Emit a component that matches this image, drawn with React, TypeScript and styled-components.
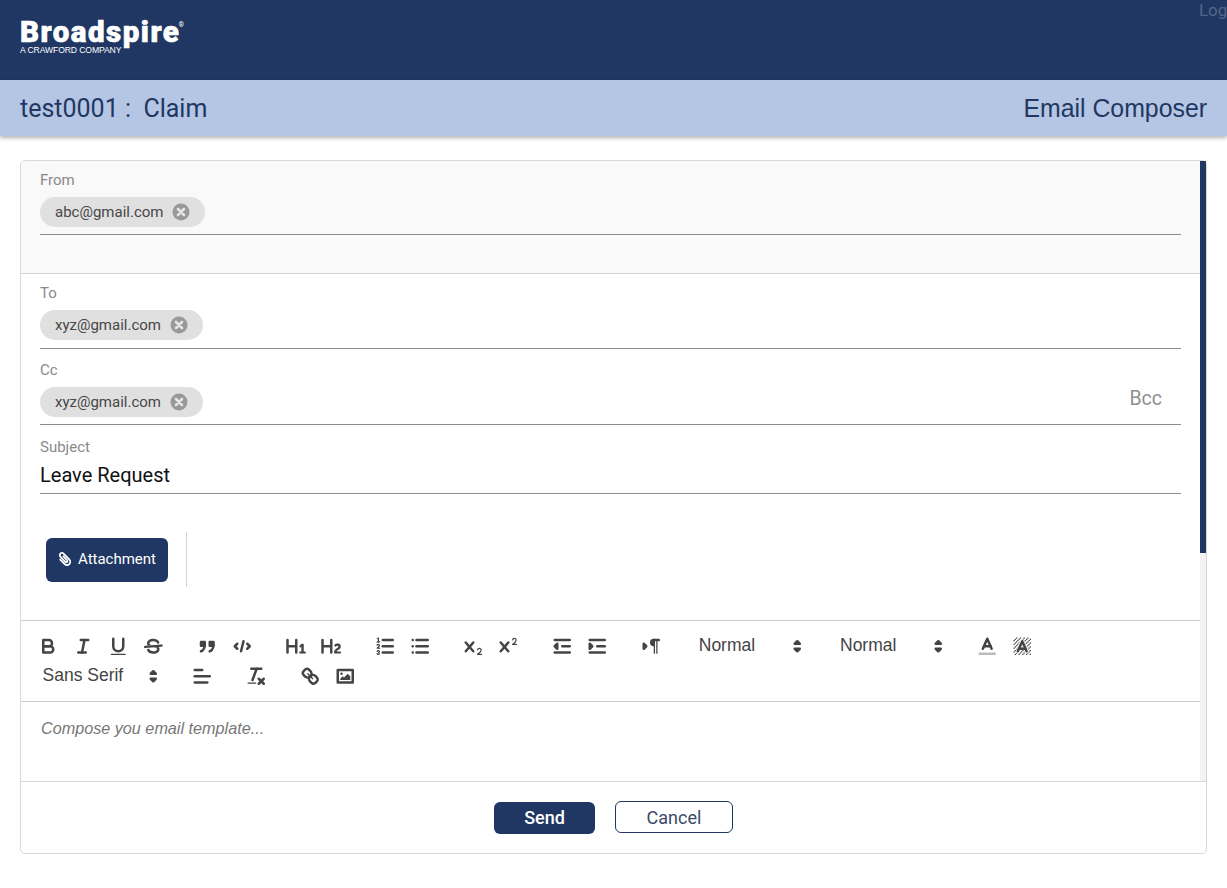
import React from "react"
import styled, { createGlobalStyle } from "styled-components"
import { FaPaperclip } from "react-icons/fa"

const navy = "#1f3762"

const GlobalStyle = createGlobalStyle`
  html, body {
    margin: 0;
    padding: 0;
    background: #fff;
    overflow: hidden;
  }
  body {
    font-family: Roboto, "Liberation Sans", sans-serif;
  }
  * {
    box-sizing: border-box;
  }
`

const Page = styled.div`
  width: 1227px;
  height: 888px;
  overflow: hidden;
`

const Header = styled.header`
  height: 80px;
  display: flex;
  justify-content: space-between;
  background-color: ${navy};
`

const Logo = styled.div`
  padding: 18px 0 0 20px;
  color: #fff;
`

const LogoName = styled.div`
  font-family: "Roboto", sans-serif;
  font-size: 29.5px;
  font-weight: 900;
  line-height: 28px;
  letter-spacing: 1.5px;
  -webkit-text-stroke: 0.6px #fff;

  sup {
    margin-left: -2px;
    font-size: 7px;
    font-weight: 400;
    letter-spacing: 0;
    line-height: 0;
    vertical-align: 15px;
    -webkit-text-stroke: 0;
  }
`

const LogoTag = styled.div`
  font-family: "Liberation Sans", sans-serif;
  font-size: 8.6px;
  line-height: 8px;
  letter-spacing: -0.1px;
`

const Logout = styled.a`
  flex: none;
  height: 20px;
  margin: 0 -25px 0 0;
  font-size: 17px;
  line-height: 20px;
  color: #53668b;
`

const SubHeader = styled.div`
  height: 56px;
  padding: 0 20px;
  display: flex;
  justify-content: space-between;
  align-items: center;
  background-color: #b4c6e4;
  box-shadow: 0 2px 4px rgba(0, 0, 0, 0.3);
  color: ${navy};
`

const ClaimTitle = styled.div`
  font-size: 25px;
  white-space: pre;
`

const ComposerTitle = styled.div`
  padding-top: 1px;
  font-family: "Liberation Sans", sans-serif;
  font-size: 24.85px;
`

const Card = styled.section`
  height: 694px;
  margin: 24px 20px 0;
  display: flex;
  flex-direction: column;
  border: 1px solid #d8d8d8;
  border-radius: 5px;
`

const CardBody = styled.div`
  flex: 1;
  min-height: 0;
  display: flex;
`

const ComposePane = styled.div`
  flex: 1;
  min-width: 0;
  overflow: hidden;
`

const ScrollTrack = styled.div`
  flex: none;
  width: 6px;
  background-color: #f3f3f3;
`

const ScrollThumb = styled.div`
  height: 392px;
  background-color: ${navy};
`

const FromSection = styled.div`
  height: 113px;
  padding: 10px 19px 0;
  background-color: #f9f9f9;
  border-bottom: 1px solid #d4d4d4;
  border-top-left-radius: 4px;
`

const Fields = styled.div`
  padding: 10px 19px 0;
`

const Field = styled.div<{ $gap?: number }>`
  margin-top: ${props => props.$gap || 0}px;
`

const Label = styled.div`
  height: 18px;
  margin-bottom: 8px;
  font-size: 15px;
  line-height: 18px;
  color: #8a8a8a;
`

const ChipRow = styled.div<{ $pad?: number }>`
  display: flex;
  justify-content: space-between;
  align-items: center;
  padding-bottom: ${props => props.$pad || 7}px;
  border-bottom: 1px solid #8c8c8c;
`

const Chip = styled.div`
  height: 30px;
  padding: 0 15px;
  display: inline-flex;
  align-items: center;
  gap: 9px;
  border-radius: 15px;
  background-color: #e0e0e0;
  color: #474747;
  font-size: 15px;
`

const BccLink = styled.span`
  margin-right: 19px;
  padding-bottom: 6px;
  font-size: 19.5px;
  line-height: 24px;
  color: #8f8f8f;
`

const SubjectValue = styled.div`
  height: 32px;
  margin-top: -2px;
  border-bottom: 1px solid #8c8c8c;
  font-size: 20px;
  line-height: 26px;
  color: #111;
`

const AttachmentRow = styled.div`
  height: 126px;
  padding: 38px 0 0 25px;
  display: flex;
  align-items: flex-start;
`

const AttachmentButton = styled.button`
  width: 122px;
  height: 44px;
  margin-top: 6px;
  padding: 0 0 2px;
  display: flex;
  align-items: center;
  justify-content: center;
  gap: 6px;
  border: 0;
  border-radius: 6px;
  background-color: ${navy};
  color: #fff;
  font-family: inherit;
  font-size: 15px;
  font-weight: 400;

  svg {
    transform: scaleX(-1);
  }
`

const VerticalRule = styled.div`
  width: 1px;
  height: 55px;
  margin-left: 18px;
  background-color: #d4d4d4;
`

const Toolbar = styled.div`
  padding: 10px;
  display: flex;
  flex-wrap: wrap;
  border-top: 1px solid #ccc;
  border-bottom: 1px solid #ccc;
`

const ToolGroup = styled.div`
  margin-right: 18.75px;
  display: flex;
`

const ToolButton = styled.button`
  width: 35px;
  height: 30px;
  padding: 3.75px 6.25px;
  border: 0;
  background: none;

  svg {
    display: block;
    width: 22.5px;
    height: 22.5px;
  }
`

const Picker = styled.div<{ $width: number }>`
  width: ${props => props.$width}px;
  height: 30px;
  padding: 0 0 2px 11.5px;
  display: flex;
  align-items: center;
  justify-content: space-between;
  font-family: "Liberation Sans", sans-serif;
  font-size: 17.5px;
  color: #444;

  svg {
    width: 22.5px;
    height: 22.5px;
    margin: 2px 1.5px 0 0;
  }
`

const Stroke = styled.g`
  fill: none;
  stroke: #444;
  stroke-width: 2;
  stroke-linecap: round;
  stroke-linejoin: round;
`

const Fill = styled.g`
  fill: #444;
`

const Editor = styled.div`
  padding: 15px 20px;
  font-family: "Liberation Sans", sans-serif;
  font-size: 16.2px;
  font-style: italic;
  line-height: 22px;
  color: #777;
`

const Footer = styled.footer`
  height: 72px;
  padding-top: 19px;
  display: flex;
  justify-content: center;
  align-items: flex-start;
  gap: 20px;
  border-top: 1px solid #d8d8d8;
`

const SendButton = styled.button`
  width: 101px;
  height: 32px;
  margin-top: 1px;
  padding: 0 0 2px;
  border: 0;
  border-radius: 6px;
  background-color: ${navy};
  color: #fff;
  font-family: inherit;
  font-size: 18px;
  font-weight: 500;
`

const CancelButton = styled.button`
  width: 118px;
  height: 32px;
  border: 1px solid ${navy};
  border-radius: 6px;
  background-color: #fff;
  color: #3b4a6b;
  font-family: inherit;
  font-size: 18px;
`

function ChipDelete() {
  return (
    <svg width="18" height="18" viewBox="0 0 18 18">
      <circle cx="9" cy="9" r="8.5" fill="#999" />
      <path d="M6 6l6 6M12 6l-6 6" stroke="#e6e6e6" strokeWidth="2.6" strokeLinecap="round" />
    </svg>
  )
}

function Icon({ children }: { children: React.ReactNode }) {
  return (
    <ToolButton type="button">
      <svg viewBox="0 0 18 18">{children}</svg>
    </ToolButton>
  )
}

function Arrows() {
  return (
    <svg viewBox="0 0 18 18">
      <Stroke>
        <polygon points="7 11 9 13 11 11 7 11" fill="#444" />
        <polygon points="7 7 9 5 11 7 7 7" fill="#444" />
      </Stroke>
    </svg>
  )
}

const crossX =
  "M9.65,5.241a1,1,0,0,0-1.409.108L6,7.964,3.759,5.349A1,1,0,0,0,2.192,6.59178Q2.2,6.6,2.241,6.651L4.684,9.5,2.241,12.349A1,1,0,0,0,3.759,13.651L6,11.036l2.241,2.615a1,1,0,0,0,1.519-1.3L7.316,9.5,9.759,6.651A1,1,0,0,0,9.65,5.241Z"

// diagonal hatch behind the background colour icon
const hatch: [number, number][] = []
for (let y = 2; y < 16; y++) {
  for (let x = 2; x < 16; x++) {
    if ((x + y) % 3 === 0) hatch.push([x, y])
  }
}

export default function App() {
  return (
    <Page>
      <GlobalStyle />
      <Header>
        <Logo>
          <LogoName>
            Broadspire<sup>®</sup>
          </LogoName>
          <LogoTag>A CRAWFORD COMPANY</LogoTag>
        </Logo>
        <Logout>Logout</Logout>
      </Header>
      <SubHeader>
        <ClaimTitle>test0001 :  Claim</ClaimTitle>
        <ComposerTitle>Email Composer</ComposerTitle>
      </SubHeader>
      <Card>
        <CardBody>
          <ComposePane>
            <FromSection>
              <Label>From</Label>
              <ChipRow>
                <Chip>
                  abc@gmail.com
                  <ChipDelete />
                </Chip>
              </ChipRow>
            </FromSection>
            <Fields>
              <Field>
                <Label>To</Label>
                <ChipRow $pad={8}>
                  <Chip>
                    xyz@gmail.com
                    <ChipDelete />
                  </Chip>
                </ChipRow>
              </Field>
              <Field $gap={12}>
                <Label>Cc</Label>
                <ChipRow>
                  <Chip>
                    xyz@gmail.com
                    <ChipDelete />
                  </Chip>
                  <BccLink>Bcc</BccLink>
                </ChipRow>
              </Field>
              <Field $gap={13}>
                <Label>Subject</Label>
                <SubjectValue>Leave Request</SubjectValue>
              </Field>
            </Fields>
            <AttachmentRow>
              <AttachmentButton type="button">
                <FaPaperclip size={14} />
                Attachment
              </AttachmentButton>
              <VerticalRule />
            </AttachmentRow>
            <Toolbar>
              <ToolGroup>
                <Icon>
                  <Stroke>
                    <path d="M5,4H9.5A2.5,2.5,0,0,1,12,6.5v0A2.5,2.5,0,0,1,9.5,9H5A0,0,0,0,1,5,9V4A0,0,0,0,1,5,4Z" />
                    <path d="M5,9h5.5A2.5,2.5,0,0,1,13,11.5v0A2.5,2.5,0,0,1,10.5,14H5a0,0,0,0,1,0,0V9A0,0,0,0,1,5,9Z" />
                  </Stroke>
                </Icon>
                <Icon>
                  <Stroke>
                    <line x1="7" x2="13" y1="4" y2="4" />
                    <line x1="5" x2="11" y1="14" y2="14" />
                    <line x1="8" x2="10" y1="14" y2="4" />
                  </Stroke>
                </Icon>
                <Icon>
                  <Stroke>
                    <path d="M5,3V9a4.012,4.012,0,0,0,4,4H9a4.012,4.012,0,0,0,4-4V3" />
                  </Stroke>
                  <Fill>
                    <rect height="1" rx="0.5" ry="0.5" width="12" x="3" y="15" />
                  </Fill>
                </Icon>
                <Icon>
                  <Stroke>
                    <line x1="15.5" x2="2.5" y1="8.5" y2="9.5" />
                  </Stroke>
                  <Fill>
                    <path d="M9.007,8C6.542,7.791,6,7.519,6,6.5,6,5.792,7.283,5,9,5c1.571,0,2.765.679,2.969,1.309a1,1,0,0,0,1.9-.617C13.356,4.106,11.354,3,9,3,6.2,3,4,4.538,4,6.5a3.2,3.2,0,0,0,.5,1.843Z" />
                    <path d="M8.984,10C11.457,10.208,12,10.479,12,11.5c0,.708-1.283,1.5-3,1.5-1.571,0-2.765-.679-2.969-1.309a1,1,0,1,0-1.9.617C4.644,13.894,6.646,15,9,15c2.8,0,5-1.538,5-3.5a3.2,3.2,0,0,0-.5-1.843Z" />
                  </Fill>
                </Icon>
              </ToolGroup>
              <ToolGroup>
                <Icon>
                  <Stroke>
                    <rect height="3" width="3" x="4" y="5.5" fill="#444" />
                    <rect height="3" width="3" x="11" y="5.5" fill="#444" />
                    <path d="M7,8c0,4.031-3,5-3,5" />
                    <path d="M14,8c0,4.031-3,5-3,5" />
                  </Stroke>
                </Icon>
                <Icon>
                  <Stroke>
                    <polyline points="5 7 3 9 5 11" />
                    <polyline points="13 7 15 9 13 11" />
                    <line x1="10" x2="8" y1="5" y2="13" />
                  </Stroke>
                </Icon>
              </ToolGroup>
              <ToolGroup>
                <Icon>
                  <Fill>
                    <path d="M10,4V14a1,1,0,0,1-2,0V10H3v4a1,1,0,0,1-2,0V4A1,1,0,0,1,3,4V8H8V4a1,1,0,0,1,2,0Zm6.06787,9.209H14.98975V7.59863a.54085.54085,0,0,0-.605-.60547h-.62744a1.01119,1.01119,0,0,0-.748.29688L11.645,8.56641a.5435.5435,0,0,0-.022.8584l.28613.30762a.53861.53861,0,0,0,.84717.0332l.09912-.08789a1.2137,1.2137,0,0,0,.2417-.35254h.02246s-.01123.30859-.01123.60547V13.209H12.041a.54085.54085,0,0,0-.605.60547v.43945a.54085.54085,0,0,0,.605.60547h4.02686a.54085.54085,0,0,0,.605-.60547v-.43945A.54085.54085,0,0,0,16.06787,13.209Z" />
                  </Fill>
                </Icon>
                <Icon>
                  <Fill>
                    <path d="M16.73975,13.81445v.43945a.54085.54085,0,0,1-.605.60547H11.855a.58392.58392,0,0,1-.64893-.60547V14.0127c0-2.90527,3.39941-3.42187,3.39941-4.55469a.77675.77675,0,0,0-.84717-.78125,1.17684,1.17684,0,0,0-.83594.38477c-.2749.26367-.561.374-.85791.13184l-.4292-.34082c-.30811-.24219-.38525-.51758-.1543-.81445a2.97155,2.97155,0,0,1,2.45361-1.17676,2.45393,2.45393,0,0,1,2.68408,2.40918c0,2.45312-3.1792,2.92676-3.27832,3.93848h2.79443A.54085.54085,0,0,1,16.73975,13.81445ZM9,3A.99974.99974,0,0,0,8,4V8H3V4A1,1,0,0,0,1,4V14a1,1,0,0,0,2,0V10H8v4a1,1,0,0,0,2,0V4A.99974.99974,0,0,0,9,3Z" />
                  </Fill>
                </Icon>
              </ToolGroup>
              <ToolGroup>
                <Icon>
                  <Stroke>
                    <line x1="7" x2="15" y1="4" y2="4" />
                    <line x1="7" x2="15" y1="9" y2="9" />
                    <line x1="7" x2="15" y1="14" y2="14" />
                  </Stroke>
                  <Stroke style={{ strokeWidth: 1 }}>
                    <line x1="2.5" x2="4.5" y1="5.5" y2="5.5" />
                    <path d="M4.5,10.5h-2c0-.234,1.85-1.076,1.85-2.234A0.959,0.959,0,0,0,2.5,8.156" />
                    <path d="M2.5,14.846a0.959,0.959,0,0,0,1.85-.109A0.7,0.7,0,0,0,3.75,14a0.688,0.688,0,0,0,.6-0.736,0.959,0.959,0,0,0-1.85-.109" />
                  </Stroke>
                  <Fill>
                    <path d="M3.5,6A0.5,0.5,0,0,1,3,5.5V3.085l-0.276.138A0.5,0.5,0,0,1,2.053,3c-0.124-.247-0.023-0.324.224-0.447l1-.5A0.5,0.5,0,0,1,4,2.5v3A0.5,0.5,0,0,1,3.5,6Z" />
                  </Fill>
                </Icon>
                <Icon>
                  <Stroke>
                    <line x1="6" x2="15" y1="4" y2="4" />
                    <line x1="6" x2="15" y1="9" y2="9" />
                    <line x1="6" x2="15" y1="14" y2="14" />
                    <line x1="3" x2="3" y1="4" y2="4" />
                    <line x1="3" x2="3" y1="9" y2="9" />
                    <line x1="3" x2="3" y1="14" y2="14" />
                  </Stroke>
                </Icon>
              </ToolGroup>
              <ToolGroup>
                <Icon>
                  <Fill>
                    <path d="M15.5,15H13.861a3.858,3.858,0,0,0,1.914-2.975,1.8,1.8,0,0,0-1.6-1.751A1.921,1.921,0,0,0,12.021,11.7a0.50013,0.50013,0,1,0,.957.291h0a0.914,0.914,0,0,1,1.053-.725,0.81,0.81,0,0,1,.744.762c0,1.076-1.16971,1.86982-1.93971,2.43082A1.45639,1.45639,0,0,0,12,15.5a0.5,0.5,0,0,0,.5.5h3A0.5,0.5,0,0,0,15.5,15Z" />
                    <path d={crossX} />
                  </Fill>
                </Icon>
                <Icon>
                  <Fill>
                    <path d="M15.5,7H13.861a4.015,4.015,0,0,0,1.914-2.975,1.8,1.8,0,0,0-1.6-1.751A1.922,1.922,0,0,0,12.021,3.7a0.5,0.5,0,1,0,.957.291,0.917,0.917,0,0,1,1.053-.725,0.81,0.81,0,0,1,.744.762c0,1.077-1.164,1.925-1.934,2.486A1.423,1.423,0,0,0,12,7.5a0.5,0.5,0,0,0,.5.5h3A0.5,0.5,0,0,0,15.5,7Z" />
                    <path d={crossX} />
                  </Fill>
                </Icon>
              </ToolGroup>
              <ToolGroup>
                <Icon>
                  <Stroke>
                    <line x1="3" x2="15" y1="14" y2="14" />
                    <line x1="3" x2="15" y1="4" y2="4" />
                    <line x1="9" x2="15" y1="9" y2="9" />
                    <polygon points="5 7 5 11 3 9 5 7" fill="#444" />
                  </Stroke>
                </Icon>
                <Icon>
                  <Stroke>
                    <line x1="3" x2="15" y1="14" y2="14" />
                    <line x1="3" x2="15" y1="4" y2="4" />
                    <line x1="9" x2="15" y1="9" y2="9" />
                    <polyline points="3 7 3 11 5 9 3 7" fill="#444" />
                  </Stroke>
                </Icon>
              </ToolGroup>
              <ToolGroup>
                <Icon>
                  <Stroke>
                    <polygon points="3 11 5 9 3 7 3 11" fill="#444" />
                    <line x1="15" x2="11" y1="4" y2="4" />
                  </Stroke>
                  <Fill>
                    <path d="M11,3a3,3,0,0,0,0,6h1V3H11Z" />
                    <rect height="11" width="1" x="11" y="4" />
                    <rect height="11" width="1" x="13" y="4" />
                  </Fill>
                </Icon>
              </ToolGroup>
              <ToolGroup>
                <Picker $width={122.5}>
                  Normal
                  <Arrows />
                </Picker>
              </ToolGroup>
              <ToolGroup>
                <Picker $width={122.5}>
                  Normal
                  <Arrows />
                </Picker>
              </ToolGroup>
              <ToolGroup>
                <Icon>
                  <Stroke>
                    <line x1="3" x2="15" y1="15" y2="15" stroke="#bbb" />
                    <polyline points="5.5 11 9 3 12.5 11" />
                    <line x1="11.63" x2="6.38" y1="9" y2="9" />
                  </Stroke>
                </Icon>
                <Icon>
                  <Fill>
                    {hatch.map(([x, y]) => (
                      <rect key={`${x}-${y}`} x={x} y={y} width="1" height="1" />
                    ))}
                  </Fill>
                  <Stroke style={{ stroke: "#fff", strokeWidth: 3.2 }}>
                    <polyline points="5.5 13 9 5 12.5 13" />
                  </Stroke>
                  <Stroke>
                    <polyline points="5.5 13 9 5 12.5 13" />
                    <line x1="11.63" x2="6.38" y1="11" y2="11" />
                  </Stroke>
                </Icon>
              </ToolGroup>
              <ToolGroup>
                <Picker $width={135}>
                  Sans Serif
                  <Arrows />
                </Picker>
              </ToolGroup>
              <ToolGroup>
                <Icon>
                  <Stroke>
                    <line x1="3" x2="15" y1="9" y2="9" />
                    <line x1="3" x2="13" y1="14" y2="14" />
                    <line x1="3" x2="9" y1="4" y2="4" />
                  </Stroke>
                </Icon>
              </ToolGroup>
              <ToolGroup>
                <Icon>
                  <Stroke>
                    <line x1="5" x2="13" y1="3" y2="3" />
                    <line x1="6" x2="9.35" y1="12" y2="3" />
                    <line x1="11" x2="15" y1="11" y2="15" />
                    <line x1="15" x2="11" y1="11" y2="15" />
                  </Stroke>
                  <Fill>
                    <rect height="1" rx="0.5" ry="0.5" width="7" x="2" y="14" />
                  </Fill>
                </Icon>
              </ToolGroup>
              <ToolGroup>
                <Icon>
                  <Stroke>
                    <line x1="7" x2="11" y1="7" y2="11" style={{ strokeWidth: 1 }} />
                    <path d="M8.9,4.577a3.476,3.476,0,0,1,.36,4.679A3.476,3.476,0,0,1,4.577,8.9C3.185,7.5,2.035,6.4,4.217,4.217S7.5,3.185,8.9,4.577Z" />
                    <path d="M13.423,9.1a3.476,3.476,0,0,0-4.679-.36,3.476,3.476,0,0,0,.36,4.679c1.392,1.392,2.5,2.542,4.679.36S14.815,10.5,13.423,9.1Z" />
                  </Stroke>
                </Icon>
                <Icon>
                  <Stroke>
                    <rect height="10" width="12" x="3" y="4" />
                  </Stroke>
                  <Fill>
                    <circle cx="6" cy="7" r="1" />
                    <polyline points="5 12 5 11 7 9 8 10 11 7 13 9 13 12 5 12" />
                  </Fill>
                </Icon>
              </ToolGroup>
            </Toolbar>
            <Editor>Compose you email template...</Editor>
          </ComposePane>
          <ScrollTrack>
            <ScrollThumb />
          </ScrollTrack>
        </CardBody>
        <Footer>
          <SendButton type="button">Send</SendButton>
          <CancelButton type="button">Cancel</CancelButton>
        </Footer>
      </Card>
    </Page>
  )
}
